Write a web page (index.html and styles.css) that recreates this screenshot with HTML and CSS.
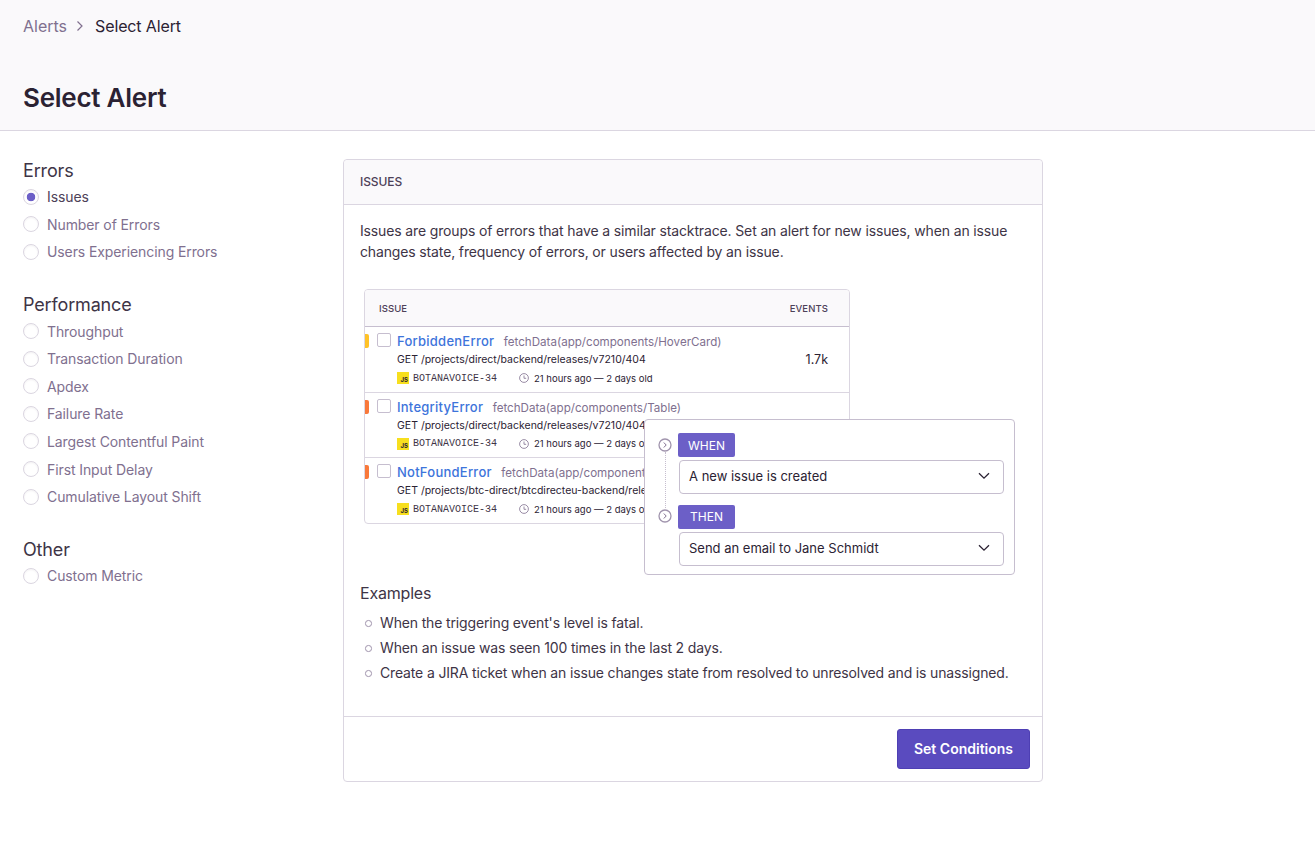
FILE: index.html
```html
<!DOCTYPE html>
<html lang="en">
<head>
<meta charset="utf-8">
<title>Select Alert</title>
<link rel="stylesheet" href="styles.css">
</head>
<body>
<header class="page-header">
  <nav class="crumbs">
    <span class="crumb-link">Alerts</span>
    <svg class="crumb-sep" viewBox="0 0 8 12" width="8" height="12"><path d="M1.5 1.5 6 6l-4.5 4.5" fill="none" stroke="#80708f" stroke-width="1.2"/></svg>
    <span class="crumb-current">Select Alert</span>
  </nav>
  <h1 class="page-title">Select Alert</h1>
</header>
<main class="layout">
  <aside class="sidebar">
    <section class="group">
      <h2 class="group-title">Errors</h2>
      <label class="option selected"><span class="radio"></span>Issues</label>
      <label class="option"><span class="radio"></span>Number of Errors</label>
      <label class="option"><span class="radio"></span>Users Experiencing Errors</label>
    </section>
    <section class="group">
      <h2 class="group-title">Performance</h2>
      <label class="option"><span class="radio"></span>Throughput</label>
      <label class="option"><span class="radio"></span>Transaction Duration</label>
      <label class="option"><span class="radio"></span>Apdex</label>
      <label class="option"><span class="radio"></span>Failure Rate</label>
      <label class="option"><span class="radio"></span>Largest Contentful Paint</label>
      <label class="option"><span class="radio"></span>First Input Delay</label>
      <label class="option"><span class="radio"></span>Cumulative Layout Shift</label>
    </section>
    <section class="group">
      <h2 class="group-title">Other</h2>
      <label class="option"><span class="radio"></span>Custom Metric</label>
    </section>
  </aside>
  <section class="panel">
    <div class="panel-header">ISSUES</div>
    <div class="panel-body">
      <p class="intro">Issues are groups of errors that have a similar stacktrace. Set an alert for new issues, when an issue changes state, frequency of errors, or users affected by an issue.</p>
      <div class="illustration">
        <div class="issues">
          <div class="issues-head"><span>ISSUE</span><span>EVENTS</span></div>
          <div class="issue">
            <span class="level yellow"></span><span class="check"></span>
            <div class="issue-main">
              <div class="issue-title"><b>ForbiddenError</b><span>fetchData(app/components/HoverCard)</span></div>
              <div class="issue-url">GET /projects/direct/backend/releases/v7210/404</div>
              <div class="issue-meta"><span class="js">JS</span><span class="short-id">BOTANAVOICE-34</span><svg class="clock" viewBox="0 0 10 10" width="10" height="10"><circle cx="5" cy="5" r="4.4" fill="none" stroke="#80708f" stroke-width=".8"/><path d="M5 2.5V5.3H7.2" fill="none" stroke="#80708f" stroke-width=".8"/></svg><span>21 hours ago — 2 days old</span></div>
            </div>
            <span class="count">1.7k</span>
          </div>
          <div class="issue">
            <span class="level orange"></span><span class="check"></span>
            <div class="issue-main">
              <div class="issue-title"><b>IntegrityError</b><span>fetchData(app/components/Table)</span></div>
              <div class="issue-url">GET /projects/direct/backend/releases/v7210/404</div>
              <div class="issue-meta"><span class="js">JS</span><span class="short-id">BOTANAVOICE-34</span><svg class="clock" viewBox="0 0 10 10" width="10" height="10"><circle cx="5" cy="5" r="4.4" fill="none" stroke="#80708f" stroke-width=".8"/><path d="M5 2.5V5.3H7.2" fill="none" stroke="#80708f" stroke-width=".8"/></svg><span>21 hours ago — 2 days old</span></div>
            </div>
          </div>
          <div class="issue last">
            <span class="level orange"></span><span class="check"></span>
            <div class="issue-main">
              <div class="issue-title"><b>NotFoundError</b><span>fetchData(app/components/Table)</span></div>
              <div class="issue-url">GET /projects/btc-direct/btcdirecteu-backend/releases</div>
              <div class="issue-meta"><span class="js">JS</span><span class="short-id">BOTANAVOICE-34</span><svg class="clock" viewBox="0 0 10 10" width="10" height="10"><circle cx="5" cy="5" r="4.4" fill="none" stroke="#80708f" stroke-width=".8"/><path d="M5 2.5V5.3H7.2" fill="none" stroke="#80708f" stroke-width=".8"/></svg><span>21 hours ago — 2 days old</span></div>
            </div>
          </div>
        </div>
        <div class="rule-card">
          <span class="rule-line"></span>
          <div class="rule-step">
            <svg class="step-dot" viewBox="0 0 14 14" width="14" height="14"><circle cx="7" cy="7" r="6" fill="#fff" stroke="#a094ad" stroke-width="1.3"/><path d="M5.8 4.5 8.2 7 5.8 9.5" fill="none" stroke="#80708f" stroke-width="1"/></svg>
            <span class="rule-tag">WHEN</span>
          </div>
          <div class="rule-select"><span>A new issue is created</span><svg viewBox="0 0 12 8" width="12" height="8"><path d="M1 1.2 6 6.2l5-5" fill="none" stroke="#2b2233" stroke-width="1.3"/></svg></div>
          <div class="rule-step">
            <svg class="step-dot" viewBox="0 0 14 14" width="14" height="14"><circle cx="7" cy="7" r="6" fill="#fff" stroke="#a094ad" stroke-width="1.3"/><path d="M5.8 4.5 8.2 7 5.8 9.5" fill="none" stroke="#80708f" stroke-width="1"/></svg>
            <span class="rule-tag">THEN</span>
          </div>
          <div class="rule-select"><span>Send an email to Jane Schmidt</span><svg viewBox="0 0 12 8" width="12" height="8"><path d="M1 1.2 6 6.2l5-5" fill="none" stroke="#2b2233" stroke-width="1.3"/></svg></div>
        </div>
      </div>
      <h3 class="examples-title">Examples</h3>
      <ul class="examples">
        <li>When the triggering event's level is fatal.</li>
        <li>When an issue was seen 100 times in the last 2 days.</li>
        <li>Create a JIRA ticket when an issue changes state from resolved to unresolved and is unassigned.</li>
      </ul>
    </div>
    <div class="panel-footer"><button class="primary" type="button">Set Conditions</button></div>
  </section>
</main>
</body>
</html>
```
FILE: styles.css
```css
* { box-sizing: border-box; }
html, body { margin: 0; padding: 0; }
body {
  background: #fff;
  color: #2b2233;
  font-family: Inter, "Noto Sans", "Liberation Sans", sans-serif;
  font-size: 14px;
  min-height: 854px;
}
.page-header {
  height: 131px;
  background: #faf9fb;
  border-bottom: 1px solid #dbd6e1;
  padding: 15px 23px 0;
}
.crumbs {
  display: flex;
  align-items: center;
  height: 22px;
  font-size: 16px;
}
.crumb-link { color: #80708f; }
.crumb-sep { margin: 0 11px 0 9px; }
.crumb-current { color: #2b2233; letter-spacing: -0.13px; }
.page-title {
  margin: 43px 0 0;
  font-size: 26px;
  line-height: 36px;
  font-weight: 600;
  letter-spacing: -0.25px;
  color: #2b2233;
}
.layout {
  display: flex;
  padding: 28px 0 0 23px;
}
.sidebar { width: 320px; flex: none; }
.group { margin-bottom: 27.5px; }
.group-title {
  margin: 0;
  font-size: 18px;
  line-height: 24px;
  font-weight: 400;
  letter-spacing: -0.15px;
  color: #3e3446;
}
.option {
  display: flex;
  align-items: center;
  height: 27.6px;
  color: #80708f;
  font-size: 14px;
  letter-spacing: -0.1px;
}
.option.selected { color: #4d4158; }
.radio {
  width: 16px;
  height: 16px;
  border: 1px solid #dbd6e1;
  border-radius: 50%;
  margin-right: 8px;
  flex: none;
  box-shadow: inset 0 1px 2px rgba(43, 34, 51, 0.06);
}
.option.selected .radio {
  background: radial-gradient(circle, #6c5fc7 0 4px, #fff 4.6px);
}
.panel {
  width: 700px;
  height: 623px;
  border: 1px solid #dbd6e1;
  border-radius: 4px;
  display: flex;
  flex-direction: column;
}
.panel-header {
  height: 45px;
  flex: none;
  display: flex;
  align-items: center;
  padding: 0 16px 2px;
  background: #faf9fb;
  border-bottom: 1px solid #dbd6e1;
  border-radius: 4px 4px 0 0;
  font-size: 12px;
  font-weight: 500;
  letter-spacing: -0.1px;
  color: #4d4158;
}
.panel-body { flex: 1; padding: 15px 16px 0; }
.intro {
  margin: 0;
  line-height: 21px;
  font-size: 14px;
  letter-spacing: -0.14px;
  color: #3e3446;
}
.illustration {
  position: relative;
  height: 292px;
  margin-top: 27px;
  padding-left: 4px;
}
.issues {
  width: 486px;
  height: 235px;
  border: 1px solid #dbd6e1;
  border-radius: 4px;
  overflow: hidden;
}
.issues-head {
  height: 37px;
  display: flex;
  align-items: center;
  justify-content: space-between;
  padding: 0 21px 0 14px;
  background: #faf9fb;
  border-bottom: 1px solid #c6becf;
  font-size: 9.5px;
  font-weight: 500;
  letter-spacing: 0.1px;
  color: #4d4158;
}
.issue {
  position: relative;
  display: flex;
  height: 65.5px;
  padding: 6px 21px 0 12px;
  border-bottom: 1px solid #dbd6e1;
}
.issue.last { border-bottom: 0; }
.level {
  position: absolute;
  left: 0;
  top: 7px;
  width: 4px;
  height: 14px;
  border-radius: 0 2px 2px 0;
}
.level.yellow { background: #ffc227; }
.level.orange { background: #f9793a; }
.check {
  width: 14px;
  height: 14px;
  border: 1px solid #c6becf;
  border-radius: 2px;
  flex: none;
  margin-right: 6px;
  background: #fff;
}
.issue-main { flex: 1; white-space: nowrap; min-width: 0; }
.issue-title {
  display: flex;
  align-items: baseline;
  line-height: 16px;
  font-size: 11.6px;
  color: #80708f;
}
.issue-title b {
  font-size: 13px;
  font-weight: 500;
  letter-spacing: 0.25px;
  color: #3d74db;
  margin-right: 9.5px;
}
.issue-url {
  font-size: 10.5px;
  line-height: 16px;
  margin-top: 2px;
  color: #2b2233;
}
.issue-meta {
  display: flex;
  align-items: center;
  height: 14px;
  margin-top: 3px;
  font-size: 9.5px;
  color: #2b2233;
}
.js {
  width: 12px;
  height: 12px;
  background: #f7df1e;
  font-size: 6px;
  font-weight: 700;
  display: flex;
  align-items: flex-end;
  justify-content: flex-end;
  padding: 0 1px 0 0;
  line-height: 8px;
  flex: none;
}
.short-id {
  font-family: "Liberation Mono", monospace;
  font-size: 10px;
  margin: 0 22px 0 4px;
  width: 84px;
  flex: none;
  color: #3e3446;
}
.clock { margin-right: 5px; flex: none; }
.count { font-size: 12.5px; margin-top: 19px; }
.rule-card {
  position: absolute;
  left: 284px;
  top: 130px;
  width: 371px;
  height: 156px;
  background: #fff;
  border: 1px solid #c6becf;
  border-radius: 4px;
  padding: 13px 11px 0 13px;
}
.rule-line {
  position: absolute;
  left: 20px;
  top: 32px;
  height: 56px;
  border-left: 1px dotted #c6becf;
}
.rule-step { display: flex; align-items: center; position: relative; }
.step-dot { flex: none; margin-right: 6px; margin-top: -1px; }
.rule-tag {
  width: 57px;
  height: 24px;
  background: #6c5fc7;
  border-radius: 2px;
  color: #fff;
  font-size: 12px;
  display: flex;
  align-items: center;
  justify-content: center;
}
.rule-select {
  display: flex;
  align-items: center;
  justify-content: space-between;
  width: 325px;
  height: 34px;
  margin: 3px 0 10.5px 21px;
  padding: 0 13px 2px 9px;
  border: 1px solid #c6becf;
  border-radius: 4px;
  font-size: 13px;
  color: #2b2233;
}
.examples-title {
  margin: 0;
  font-size: 16px;
  line-height: 24px;
  font-weight: 400;
  letter-spacing: -0.2px;
  color: #3e3446;
}
.examples {
  margin: 7px 0 0;
  padding: 0 0 0 20px;
  list-style: none;
  color: #3e3446;
  letter-spacing: -0.15px;
}
.examples li { position: relative; height: 25px; line-height: 21px; }
.examples li::before {
  content: "";
  position: absolute;
  left: -15px;
  top: 8px;
  width: 4.5px;
  height: 4.5px;
  border: 1px solid #a094ad;
  border-radius: 50%;
}
.panel-footer {
  height: 65px;
  flex: none;
  display: flex;
  justify-content: flex-end;
  align-items: center;
  padding: 0 12px;
  border-top: 1px solid #dbd6e1;
}
.primary {
  width: 133px;
  height: 40px;
  padding: 0 0 2px;
  border: 1px solid #4e3fb4;
  border-radius: 3px;
  background: #5a4bbf;
  color: #fff;
  font: 600 14px Inter, "Noto Sans", sans-serif;
}
```
